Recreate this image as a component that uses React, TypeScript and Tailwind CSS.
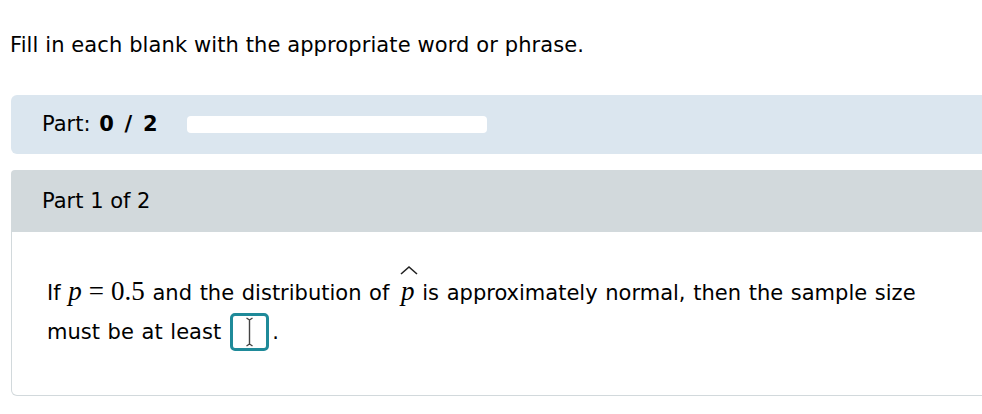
import React from "react";

export default function App() {
  const serif = { fontFamily: '"Liberation Serif", "Times New Roman", serif' };
  return (
    <div className="w-[982px] h-[414px] overflow-hidden bg-white text-black" style={{ fontFamily: '"DejaVu Sans", Verdana, sans-serif' }}>
      <div className="pl-[10px] pt-[30px] text-[21px] leading-[30px] tracking-[0.1px]">Fill in each blank with the appropriate word or phrase.</div>
      <div className="ml-[11px] mt-[35px] h-[59px] w-[990px] rounded-l-[6px] bg-[#dbe6ef] flex items-center pl-[31px]">
        <span className="text-[21px] [word-spacing:1px]">Part: <b className="ml-[1px] tracking-[1.2px]">0 / 2</b></span>
        <div className="ml-[28px] h-[17px] w-[300px] rounded-[4px] bg-white" />
      </div>
      <div className="ml-[11px] mt-[16px] w-[990px]">
        <div className="h-[62px] bg-[#d2d9dc] rounded-tl-[4px] flex items-center pl-[31px] pt-[2px] text-[21px]">Part 1 of 2</div>
        <div className="h-[164px] border border-t-0 border-[#d2d9dc] rounded-bl-[6px] pl-[35px] pt-[41px] text-[21px] leading-[37px] [word-spacing:1px]">
          <div className="whitespace-nowrap">
            If{" "}
            <span className="text-[27px] [word-spacing:0px]" style={serif}>
              <i>p</i>
              <span className="mx-[7px]">=</span>0.5
            </span>{" "}
            and the distribution of{" "}
            <span className="relative ml-[4px] inline-block text-[27px]" style={serif}>
              <i>p</i>
              <svg className="absolute left-[-1px] top-[-8px]" width="18" height="10" viewBox="0 0 18 10">
                <path d="M1 9 L9 2 L17 9" fill="none" stroke="#222" strokeWidth="1.6" />
              </svg>
            </span>{" "}
            is approximately normal, then the sample size
          </div>
          <div className="flex items-center mt-[1px]">
            <span>must be at least</span>
            <span className="ml-[9px] inline-flex h-[38px] w-[39px] shrink-0 items-center justify-center rounded-[5px] border-[3px] border-[#1f8a99]">
              <svg width="9" height="32" viewBox="0 0 9 32">
                <path d="M1.5 2 L4.5 4 L7.5 2 M4.5 4 V28 M1.5 30 L4.5 28 L7.5 30" fill="none" stroke="#444" strokeWidth="1.4" />
              </svg>
            </span>
            <span className="ml-[3px]">.</span>
          </div>
        </div>
      </div>
    </div>
  );
}
